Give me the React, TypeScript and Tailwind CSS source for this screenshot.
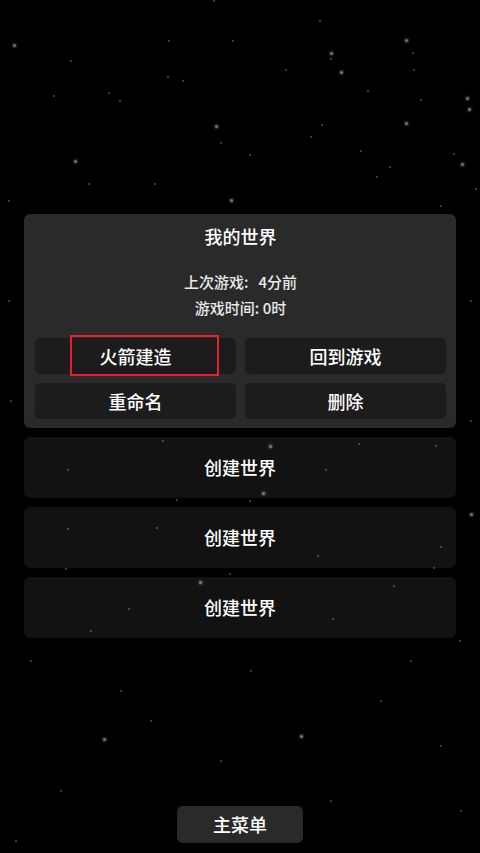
import React from 'react';

const stars: [number, number, number][] = [
  [13, 44, 2], [168, 40, 1], [232, 40, 1], [213, 0, 1], [319, 20, 1], [330, 52, 2], [330, 58, 1], [340, 71, 2],
  [285, 69, 1], [405, 39, 2], [412, 52, 1], [413, 69, 1], [367, 90, 1], [420, 99, 1], [466, 97, 2],
  [468, 108, 2], [215, 125, 2], [220, 142, 1], [321, 124, 1], [310, 136, 1], [360, 150, 1], [405, 122, 2],
  [389, 166, 1], [376, 176, 1], [453, 153, 1], [461, 163, 2], [74, 160, 2], [108, 92, 1], [119, 100, 1],
  [53, 95, 1], [70, 60, 1], [230, 199, 2], [475, 188, 1], [88, 183, 1], [154, 183, 1], [249, 154, 1],
  [167, 76, 1], [182, 80, 1], [8, 200, 1], [440, 205, 1],
  [162, 440, 1], [269, 445, 2], [358, 443, 1], [435, 445, 1], [67, 469, 1], [325, 469, 1], [262, 492, 2],
  [176, 499, 1], [249, 500, 1], [67, 528, 1], [156, 527, 1], [317, 555, 1], [440, 546, 1], [433, 567, 1],
  [65, 568, 1], [199, 581, 2], [229, 573, 1], [393, 585, 1], [128, 608, 1], [332, 618, 1], [470, 513, 2],
  [459, 640, 1], [30, 660, 1], [120, 690, 1], [250, 670, 1], [380, 700, 1], [103, 738, 2], [220, 760, 1],
  [440, 745, 1], [60, 790, 1], [330, 800, 1], [460, 810, 1], [15, 840, 1], [150, 720, 1], [300, 735, 2],
  [410, 660, 1], [190, 810, 1], [90, 630, 1], [470, 420, 1], [10, 400, 1], [8, 300, 1], [470, 300, 1],
];

function Star({ x, y, s }: { x: number; y: number; s: number }) {
  return (
    <div
      className={s === 2 ? 'absolute w-[3px] h-[3px] rounded-full bg-white/45 shadow-[0_0_2px_1px_rgba(255,255,255,0.2)]' : 'absolute w-[2px] h-[2px] rounded-full bg-white/30'}
      style={{ left: x, top: y }}
    />
  );
}

function Btn({ label, marked }: { label: string; marked?: boolean }) {
  return (
    <div className="relative h-[36px] rounded-[5px] bg-[#1c1c1c] flex items-center justify-center text-white text-[18px] font-medium">
      {marked && <div className="absolute left-[35px] top-[-3px] w-[149px] h-[41px] border-2 border-[#e3222c]" />}
      {label}
    </div>
  );
}

function CreateRow() {
  return (
    <div className="h-[61px] rounded-[6px] bg-white/[0.07] flex items-center justify-center text-white text-[18px] font-medium">
      创建世界
    </div>
  );
}

export default function App() {
  return (
    <div
      className="relative w-[480px] h-[853px] bg-black overflow-hidden flex flex-col"
      style={{ fontFamily: '"Noto Sans CJK SC", "Noto Sans", sans-serif' }}
    >
      {stars.map(([x, y, s], i) => (
        <Star key={i} x={x} y={y} s={s} />
      ))}

      <div className="relative px-[24px] pt-[214px] flex flex-col gap-[9px]">
        <div className="rounded-[6px] bg-[#2a2a2a] pl-[11px] pr-[10px] pb-[9px]">
          <div className="h-[44px] flex items-center justify-center text-white text-[18px] font-medium">我的世界</div>
          <div className="mt-[11px] flex flex-col items-center text-white/90 text-[15px] font-medium leading-[26px]">
            <div>上次游戏:&nbsp;&nbsp;&nbsp;4分前</div>
            <div>游戏时间: 0时</div>
          </div>
          <div className="mt-[17px] grid grid-cols-2 gap-[9px]">
            <Btn label="火箭建造" marked />
            <Btn label="回到游戏" />
            <Btn label="重命名" />
            <Btn label="删除" />
          </div>
        </div>
        <CreateRow />
        <CreateRow />
        <CreateRow />
      </div>

      <div className="relative mt-auto mb-[10px] self-center w-[126px] h-[37px] rounded-[6px] bg-[#2a2a2a] flex items-center justify-center text-white text-[18px] font-medium">
        主菜单
      </div>
    </div>
  );
}
